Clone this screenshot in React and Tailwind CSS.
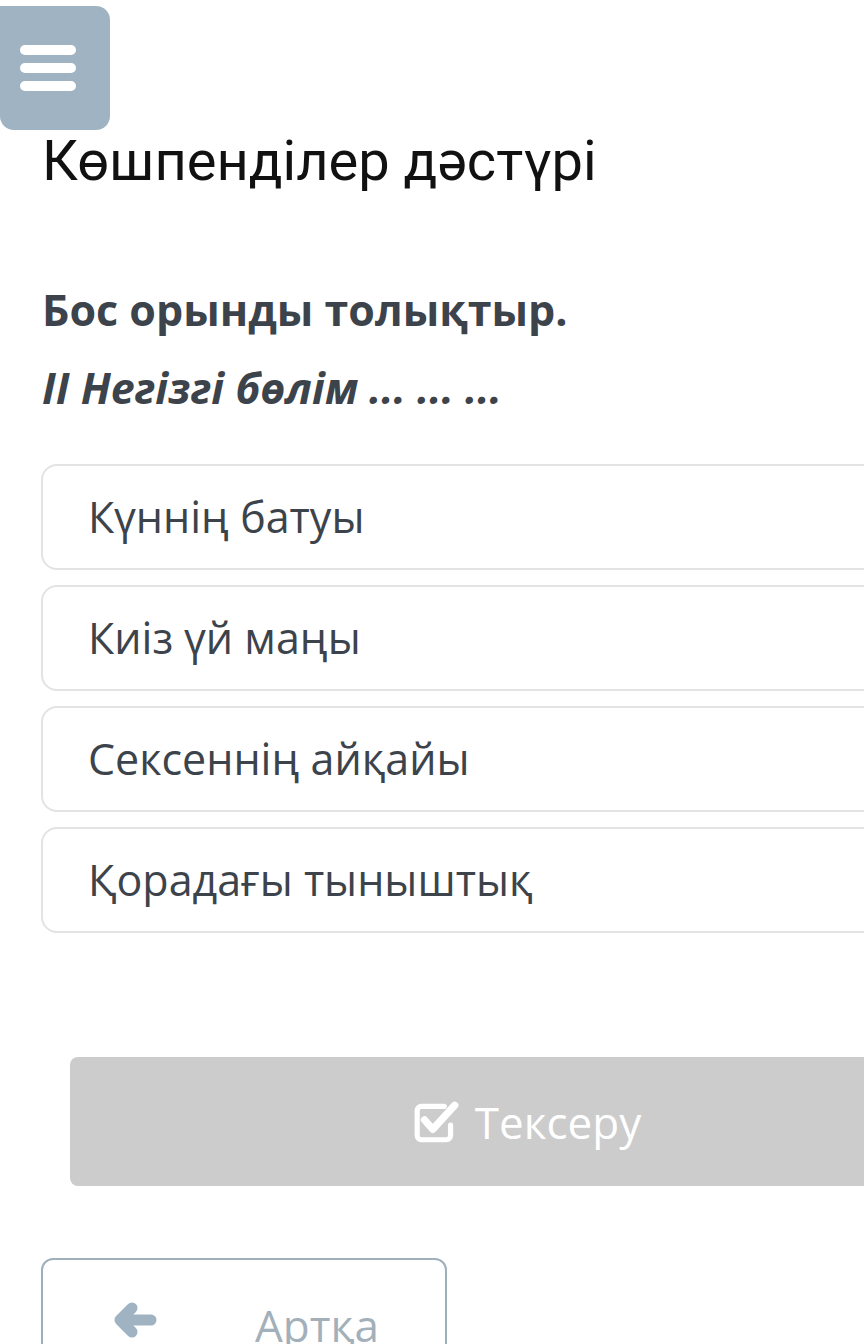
import React from 'react'

const options = ['Күннің батуы', 'Киіз үй маңы', 'Сексеннің айқайы', 'Қорадағы тыныштық']

function CheckIcon() {
  return (
    <svg width="48" height="44" viewBox="0 0 46 42" fill="none">
      <path d="M30 6 H8 a4 4 0 0 0 -4 4 v24 a4 4 0 0 0 4 4 h24 a4 4 0 0 0 4 -4 v-10" stroke="white" strokeWidth="5" strokeLinecap="round" />
      <path d="M11 19 L19 28 L40 5" stroke="white" strokeWidth="7" strokeLinecap="round" strokeLinejoin="round" />
    </svg>
  )
}

function ArrowLeft() {
  return (
    <svg width="44" height="36" viewBox="0 0 44 36">
      <path d="M19 6 L7 18 L19 30 M7 18 H38" stroke="#9fb3c2" strokeWidth="11" strokeLinecap="round" strokeLinejoin="round" fill="none" />
    </svg>
  )
}

export default function App() {
  return (
    <div className="w-[864px] h-[1344px] overflow-hidden bg-white font-['Open_Sans',sans-serif]">
      {/* menu button */}
      <div className="pt-[6px]">
        <div className="w-[110px] h-[124px] bg-[#9fb3c2] rounded-r-[14px] rounded-bl-[14px] flex flex-col justify-center items-start pl-[20px] gap-[8px]">
          <div className="w-[56px] h-[10px] bg-white rounded-full" />
          <div className="w-[56px] h-[10px] bg-white rounded-full" />
          <div className="w-[56px] h-[10px] bg-white rounded-full" />
        </div>
      </div>

      <h1 className="ml-[42px] mt-[-4px] text-[56px] leading-[70px] text-[#111] font-['Roboto',sans-serif]">
        Көшпенділер дәстүрі
      </h1>

      <h2 className="ml-[42px] mt-[84px] text-[43px] leading-[60px] font-bold text-[#3d434b]">
        Бос орынды толықтыр.
      </h2>
      <p className="ml-[42px] mt-[18px] text-[43px] leading-[60px] font-bold italic text-[#3d434b]">
        ІІ Негізгі бөлім ... ... ...
      </p>

      <div className="ml-[41px] mt-[46px] w-[900px] flex flex-col gap-[15px]">
        {options.map(o => (
          <div key={o} className="h-[106px] border-2 border-[#e3e3e3] rounded-[16px] flex items-center pl-[45px] text-[43px] text-[#3d434b]">
            {o}
          </div>
        ))}
      </div>

      <div className="ml-[70px] mt-[124px] w-[914px] h-[129px] bg-[#cccccc] rounded-[8px] flex items-center justify-center gap-[14px] text-white text-[44px]">
        <CheckIcon />
        <span>Тексеру</span>
      </div>

      <div className="ml-[41px] mt-[72px] w-[406px] h-[120px] border-2 border-[#9fb0bd] rounded-[12px] flex items-start pt-[38px]">
        <div className="ml-[70px] mt-[4px]"><ArrowLeft /></div>
        <span className="ml-[98px] text-[44px] leading-[54px] text-[#a3b0ba]">Артқа</span>
      </div>
    </div>
  )
}
